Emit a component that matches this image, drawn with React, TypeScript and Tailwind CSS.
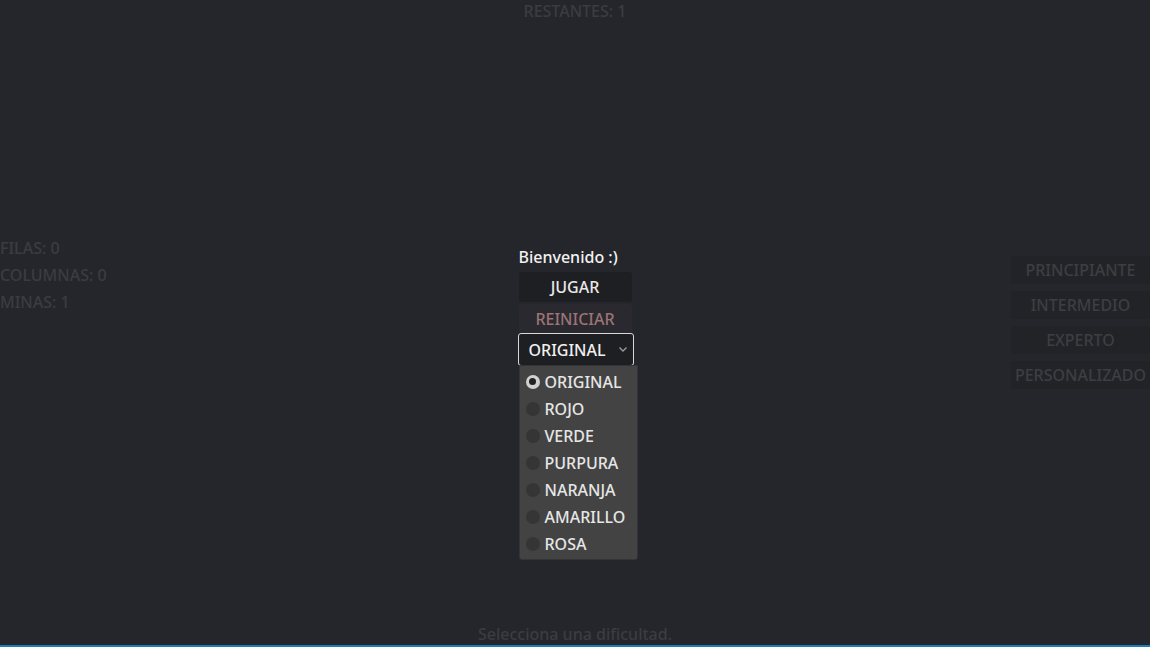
import React from "react";

const colors = ["ORIGINAL", "ROJO", "VERDE", "PURPURA", "NARANJA", "AMARILLO", "ROSA"];

export default function App() {
  return (
    <div
      className="relative flex h-[647px] w-full flex-col overflow-hidden bg-[#25262b] text-[16px] font-medium"
      style={{ fontFamily: '"Noto Sans", "Open Sans", sans-serif' }}
    >
      <div className="flex h-[22px] items-center justify-center leading-[22px] text-[#3b3c41]">RESTANTES: 1</div>

      <div className="flex flex-1">
        <div className="w-[300px] pt-[213px] leading-[27px] text-[#3b3c41]">
          <div>FILAS: 0</div>
          <div>COLUMNAS: 0</div>
          <div>MINAS: 1</div>
        </div>

        <div className="flex flex-1 justify-center pl-[2px] pt-[224px]">
          <div className="relative flex w-[115px] flex-col">
            <div className="h-[26px] leading-[22px] text-[#f2f2f2]">Bienvenido :)</div>
            <div className="flex h-[30px] w-[113px] items-center justify-center rounded-[3px] bg-[#1e1f23] text-[#e8e8e8]">JUGAR</div>
            <div className="mt-[2px] flex h-[29px] w-[113px] items-center justify-center rounded-[3px] bg-[#2a2930] text-[#9b7474]">REINICIAR</div>
            <div className="-ml-px flex h-[33px] w-[116px] items-center justify-between rounded-[3px] border border-[#d8d8d8] bg-[#1e1f23] pl-[10px] pr-[5px] text-[#f0f0f0]">
              <span>ORIGINAL</span>
              <svg width="10" height="10" viewBox="0 0 10 10" className="mb-[2px]">
                <path d="M1.5 3.5 L5 7 L8.5 3.5" stroke="#9a9a9a" strokeWidth="1.4" fill="none" />
              </svg>
            </div>
            <div className="absolute left-0 top-[119px] z-10 w-[119px] rounded-b-[3px] border border-[#333438] bg-[#434343] py-[2px] text-[#e6e6e6]">
              {colors.map((c, i) => (
                <div key={c} className="flex h-[27px] items-center gap-[5px] pl-[6px]">
                  {i === 0 ? (
                    <span className="flex h-[14px] w-[14px] items-center justify-center rounded-full bg-[#d0d0d0]">
                      <span className="h-[7px] w-[7px] rounded-full bg-[#222]" />
                    </span>
                  ) : (
                    <span className="h-[14px] w-[14px] rounded-full bg-[#353535]" />
                  )}
                  <span>{c}</span>
                </div>
              ))}
            </div>
          </div>
        </div>

        <div className="flex w-[300px] flex-col items-end gap-[7px] pt-[234px] text-[#3d3e43]">
          {["PRINCIPIANTE", "INTERMEDIO", "EXPERTO", "PERSONALIZADO"].map((t) => (
            <div key={t} className="flex h-[28px] w-[139px] items-center justify-center rounded-l-[3px] bg-[#222327]">
              {t}
            </div>
          ))}
        </div>
      </div>

      <div className="flex h-[22px] items-center justify-center leading-[22px] text-[#3b3c41]">Selecciona una dificultad.</div>
      <div className="h-[2px] bg-[#1c7bb8]" />
    </div>
  );
}
